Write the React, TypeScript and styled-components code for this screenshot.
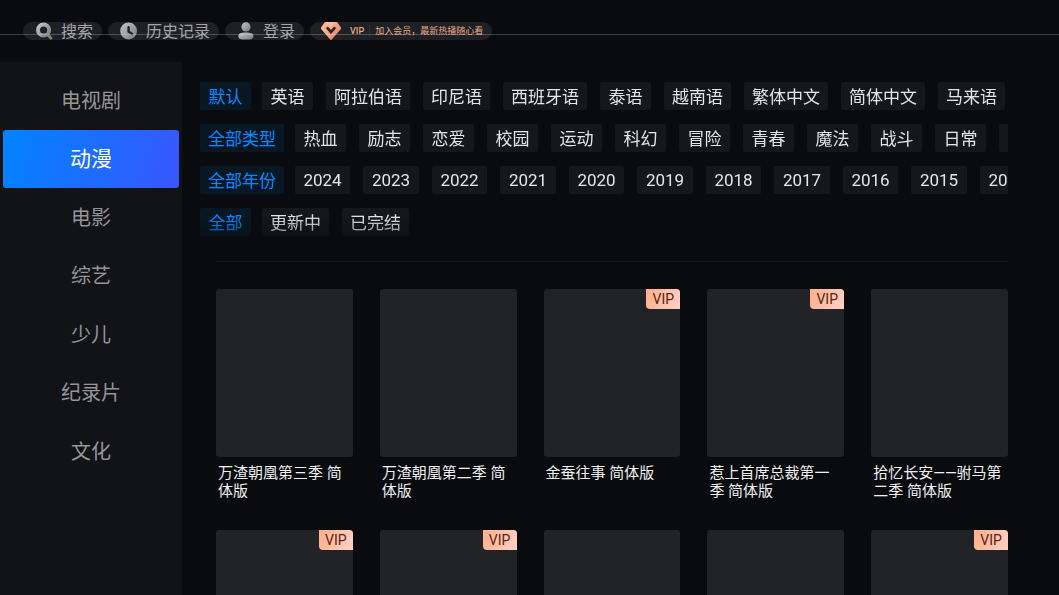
import React, { useState } from 'react';
import styled, { createGlobalStyle, css } from 'styled-components';

const GlobalStyle = createGlobalStyle`
  *, *::before, *::after { box-sizing: border-box; }
  body {
    margin: 0;
    background: #090b0f;
    color: #e6e7e9;
    font-family: Roboto, "Noto Sans CJK SC", sans-serif;
  }
  button { font-family: inherit; border: 0; margin: 0; cursor: pointer; }
  a { color: inherit; text-decoration: none; }
`;

const Page = styled.div`
  display: flex;
  flex-direction: column;
  height: 100vh;
  overflow: hidden;
`;

const TopBar = styled.header`
  position: relative;
  display: flex;
  flex: none;
  gap: 6px;
  padding: 22px 23px 22px;

  &::after {
    content: "";
    position: absolute;
    left: 0;
    right: 0;
    top: 34px;
    height: 1px;
    background: rgba(255, 255, 255, 0.22);
    pointer-events: none;
  }
`;

const Pill = styled.button`
  display: flex;
  align-items: center;
  gap: 8px;
  height: 18px;
  padding: 0 9px 0 12px;
  border-radius: 9px;
  background: #1e2023;
  color: #a2a4a7;
  font-size: 16px;
  line-height: 18px;
  white-space: nowrap;

  svg { flex: none; display: block; }
`;

const PillLabel = styled.span`
  padding-top: 2px;
`;

const VipPill = styled(Pill)`
  padding: 0 9px 0 10px;
  color: #e9a98c;
  font-size: 9px;
`;

const VipWord = styled.strong`
  font-weight: 500;
  padding-right: 5px;
  border-right: 1px solid #2e2e31;
  line-height: 12px;
`;

const VipText = styled.span`
  margin-left: -3px;
`;

const Body = styled.div`
  display: flex;
  flex: 1;
  min-height: 0;
`;

const Sidebar = styled.nav`
  display: flex;
  flex-direction: column;
  flex: none;
  width: 182px;
  padding: 10px 3px;
  background: #121316;
`;

const SideItem = styled.button<{ $active: boolean }>`
  height: 58px;
  flex: none;
  border-radius: 3px;
  background: transparent;
  color: #949597;
  font-size: 20px;
  line-height: 28px;

  &:nth-child(even) { margin-bottom: 1px; }

  ${({ $active }) =>
    $active &&
    css`
      background: linear-gradient(110deg, #0084ff, #3a55ff);
      color: #fff;
      font-size: 21px;
    `}
`;

const Main = styled.main`
  flex: 1;
  min-width: 0;
  padding: 20px 51px 0 18px;
`;

const Filters = styled.section`
  display: flex;
  flex-direction: column;
  gap: 14px;
  height: 171px;
  overflow: hidden;
  mask-image: linear-gradient(#000 134px, transparent 180px);
`;

const FilterRow = styled.div`
  display: flex;
  flex: none;
  gap: 11px;
`;

const Options = styled.div`
  display: flex;
  flex: 1;
  min-width: 0;
  gap: 13px;
  overflow: hidden;
`;

const Chip = styled.button<{ $selected?: boolean; $wide?: boolean }>`
  flex: none;
  min-width: 51px;
  height: 28px;
  padding: 2px 8px 0;
  border-radius: 2px;
  background: ${({ $selected }) => ($selected ? '#081724' : '#15171a')};
  color: ${({ $selected }) => ($selected ? '#088aff' : '#e4e5e7')};
  font-size: 17px;
  line-height: 26px;
  white-space: nowrap;

  ${({ $wide }) =>
    $wide &&
    css`
      min-width: 55px;
      padding-top: 0;
      &:nth-child(even) { min-width: 56px; }
    `}
`;

const Content = styled.section`
  margin: 8px 0 0 16px;
  padding-top: 27px;
  border-top: 1px solid #15171a;
`;

const Grid = styled.div`
  display: grid;
  grid-template-columns: repeat(5, 1fr);
  gap: 27px;
`;

const Card = styled.a`
  display: block;
  min-width: 0;
  min-height: 214px;
`;

const Poster = styled.div`
  position: relative;
  height: 168px;
  border-radius: 3px;
  background: #222326;
  overflow: hidden;
`;

const Badge = styled.span`
  position: absolute;
  top: 0;
  right: 0;
  width: 34px;
  height: 20px;
  border-radius: 0 3px 0 4px;
  background: linear-gradient(110deg, #ffb08b, #ffd0c6);
  color: #59230f;
  font-size: 14px;
  line-height: 20px;
  text-align: center;
`;

const Title = styled.h3`
  margin: 7px 2px 0;
  color: #eeeff0;
  font-size: 15px;
  font-weight: 400;
  line-height: 18px;
`;

const IconGradient = ({ id }: { id: string }) => (
  <defs>
    <linearGradient id={id} x1="0" y1="0" x2="1" y2="1">
      <stop offset="0" stopColor="#c3c9cc" />
      <stop offset="1" stopColor="#77797d" />
    </linearGradient>
  </defs>
);

const SearchIcon = () => (
  <svg width="18" height="18" viewBox="0 0 18 18" aria-hidden="true">
    <IconGradient id="search-fill" />
    <path d="M12.500 12.500 15.800 16" stroke="#7e8184" strokeWidth="3" strokeLinecap="round" />
    <circle cx="8.6" cy="8" r="5.600" fill="none" stroke="url(#search-fill)" strokeWidth="4" />
  </svg>
);

const HistoryIcon = () => (
  <svg width="18" height="18" viewBox="0 0 18 18" aria-hidden="true">
    <IconGradient id="history-fill" />
    <circle cx="8.6" cy="9" r="8.4" fill="url(#history-fill)" />
    <path d="M8.6 5.2v4.500l3.400 2" fill="none" stroke="#222427" strokeWidth="2.4" strokeLinecap="round" strokeLinejoin="round" />
  </svg>
);

const UserIcon = () => (
  <svg width="18" height="18" viewBox="0 0 18 18" aria-hidden="true">
    <IconGradient id="user-fill" />
    <circle cx="9" cy="4.9" r="4.6" fill="url(#user-fill)" />
    <path d="M1.300 14c0-2.500 2.700-3.500 7.600-3.500s7.600 1 7.600 3.500c0 2.300-2 3.600-4.300 3.600H5.600C3.300 17.600 1.300 16.300 1.300 14Z" fill="url(#user-fill)" />
  </svg>
);

const DiamondIcon = () => (
  <svg width="22" height="18" viewBox="0 0 22 18" aria-hidden="true">
    <defs>
      <linearGradient id="diamond-fill" x1="0" y1="0" x2="1" y2="1">
        <stop offset="0" stopColor="#ffc3a8" />
        <stop offset="1" stopColor="#d87f5c" />
      </linearGradient>
    </defs>
    <path
      d="M5.800 0h10.400q.8 0 1.300.6l3.300 4.700q.7 1-.1 1.900l-8.900 10.300q-.8.900-1.600 0L1.300 7.200q-.8-.9-.1-1.900L4.500.6Q5 0 5.800 0Z"
      fill="url(#diamond-fill)"
    />
    <path d="M5.800 0h10.400L11 6Z" fill="#ffd2bd" opacity=".35" />
    <path d="M1 6.500 7 8l4 10Z" fill="#ffd2bd" opacity=".25" />
    <path d="m7.500 6.200 3.500 3.800 3.500-3.800" fill="none" stroke="#33201f" strokeWidth="2.600" strokeLinecap="round" />
  </svg>
);

const categories = ['电视剧', '动漫', '电影', '综艺', '少儿', '纪录片', '文化'];

const filters = [
  {
    label: '语言',
    all: '默认',
    options: ['英语', '阿拉伯语', '印尼语', '西班牙语', '泰语', '越南语', '繁体中文', '简体中文', '马来语'],
  },
  {
    label: '类型',
    all: '全部类型',
    options: ['热血', '励志', '恋爱', '校园', '运动', '科幻', '冒险', '青春', '魔法', '战斗', '日常', ''],
  },
  {
    label: '年份',
    all: '全部年份',
    wide: true,
    options: ['2024', '2023', '2022', '2021', '2020', '2019', '2018', '2017', '2016', '2015', '2014'],
  },
  { label: '状态', all: '全部', options: ['更新中', '已完结'] },
];

const shows = [
  { title: '万渣朝凰第三季 简体版', vip: false },
  { title: '万渣朝凰第二季 简体版', vip: false },
  { title: '金蚕往事 简体版', vip: true },
  { title: '惹上首席总裁第一季 简体版', vip: true },
  { title: '拾忆长安——驸马第二季 简体版', vip: false },
  { title: '', vip: true },
  { title: '', vip: true },
  { title: '', vip: false },
  { title: '', vip: false },
  { title: '', vip: true },
];

export default function App() {
  const [category, setCategory] = useState('动漫');
  const [selected, setSelected] = useState(filters.map((f) => f.all));

  const choose = (row: number, value: string) =>
    setSelected((prev) => prev.map((v, i) => (i === row ? value : v)));

  return (
    <Page lang="zh-CN">
      <GlobalStyle />
      <TopBar>
        <Pill type="button"><SearchIcon /><PillLabel>搜索</PillLabel></Pill>
        <Pill type="button"><HistoryIcon /><PillLabel>历史记录</PillLabel></Pill>
        <Pill type="button"><UserIcon /><PillLabel>登录</PillLabel></Pill>
        <VipPill type="button">
          <DiamondIcon />
          <VipWord>VIP</VipWord>
          <VipText>加入会员，最新热播随心看</VipText>
        </VipPill>
      </TopBar>
      <Body>
        <Sidebar aria-label="频道">
          {categories.map((name) => (
            <SideItem key={name} type="button" $active={name === category} onClick={() => setCategory(name)}>
              {name}
            </SideItem>
          ))}
        </Sidebar>
        <Main>
          <Filters>
            {filters.map((f, row) => (
              <FilterRow key={f.label} role="group" aria-label={f.label}>
                <Chip type="button" $selected={selected[row] === f.all} onClick={() => choose(row, f.all)}>
                  {f.all}
                </Chip>
                <Options>
                  {f.options.map((o) => (
                    <Chip key={o} type="button" $wide={f.wide} $selected={selected[row] === o} onClick={() => choose(row, o)}>
                      {o}
                    </Chip>
                  ))}
                </Options>
              </FilterRow>
            ))}
          </Filters>
          <Content>
            <Grid>
              {shows.map((s, i) => (
                <Card key={i} href="#">
                  <Poster>{s.vip && <Badge>VIP</Badge>}</Poster>
                  <Title>{s.title}</Title>
                </Card>
              ))}
            </Grid>
          </Content>
        </Main>
      </Body>
    </Page>
  );
}
